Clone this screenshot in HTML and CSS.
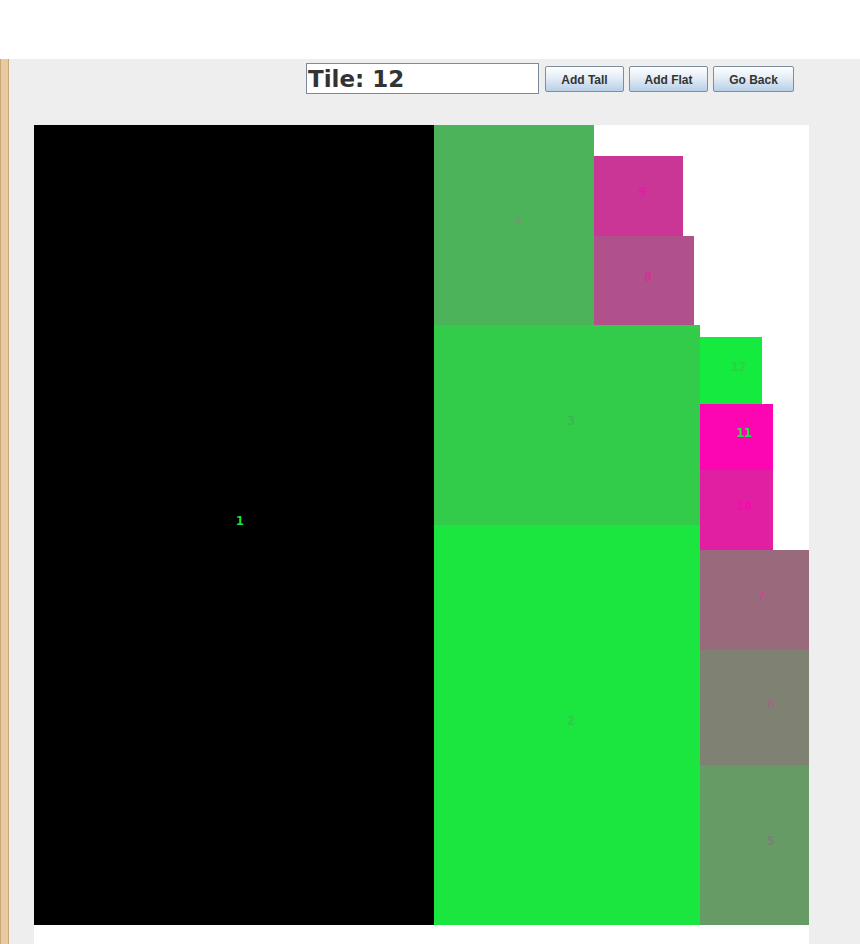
FILE: index.html
```html
<!DOCTYPE html>
<html>
<head>
<meta charset="utf-8">
<title>Tiles</title>
<link rel="stylesheet" href="styles.css">
</head>
<body>
<div class="top-band"></div>
<div class="main">
  <div class="edge"></div>
  <div class="content">
    <div class="toolbar">
      <div class="field">Tile: 12</div>
      <button class="btn btn-a">Add Tall</button>
      <button class="btn btn-a">Add Flat</button>
      <button class="btn btn-b">Go Back</button>
    </div>
    <div class="panel">
      <div class="canvas">
        <div class="tile t1"><span class="lbl l1">1</span></div>
        <div class="col mid">
          <div class="row upper">
            <div class="tile t4"><span class="lbl l4">4</span></div>
            <div class="col sub">
              <div class="sp31"></div>
              <div class="tile t9"><span class="lbl l9">9</span></div>
              <div class="tile t8"><span class="lbl l8">8</span></div>
            </div>
          </div>
          <div class="tile t3"><span class="lbl l3">3</span></div>
          <div class="tile t2"><span class="lbl l2">2</span></div>
        </div>
        <div class="col right">
          <div class="sp212"></div>
          <div class="tile t12"><span class="lbl l12">12</span></div>
          <div class="tile t11"><span class="lbl l11">11</span></div>
          <div class="tile t10"><span class="lbl l10">10</span></div>
          <div class="tile t7"><span class="lbl l7">7</span></div>
          <div class="tile t6"><span class="lbl l6">6</span></div>
          <div class="tile t5"><span class="lbl l5">5</span></div>
        </div>
      </div>
    </div>
  </div>
</div>
</body>
</html>
```
FILE: styles.css
```css
html, body {
  margin: 0;
  padding: 0;
  background: #eeeeee;
  height: 944px;
  overflow: hidden;
}
.top-band {
  height: 59px;
  background: #ffffff;
}
.main {
  display: flex;
  height: 885px;
}
.edge {
  width: 7px;
  flex: none;
  background: #e7caa0;
  border-left: 1px solid #c9a67b;
  border-right: 1px solid #c9a67b;
}
.content {
  flex: 1;
  display: flex;
  flex-direction: column;
}
.toolbar {
  display: flex;
  align-items: center;
  margin-top: 4px;
  margin-left: 297px;
  height: 31px;
}
.field {
  box-sizing: border-box;
  width: 233px;
  height: 31px;
  border: 1px solid #7a8a9b;
  background: #ffffff;
  font-family: "DejaVu Sans", sans-serif;
  font-weight: bold;
  font-size: 23px;
  line-height: 30px;
  color: #333333;
  padding-left: 1px;
}
.btn {
  box-sizing: border-box;
  height: 26px;
  margin-left: 5px;
  border: 1px solid #7d8e9f;
  border-radius: 2px;
  background: linear-gradient(#fdfeff, #e4edf6 45%, #b8cfe7);
  font-family: "Liberation Sans", Arial, sans-serif;
  font-weight: bold;
  font-size: 12px;
  color: #333333;
  padding: 2px 0 0 0;
}
.btn-a { width: 79px; }
.btn-a:first-of-type { margin-left: 6px; }
.btn-b { width: 81px; }
.panel {
  margin-top: 31px;
  margin-left: 25px;
  width: 775px;
  flex: 1;
  background: #ffffff;
}
.canvas {
  display: flex;
  height: 800px;
}
.col {
  display: flex;
  flex-direction: column;
  align-items: flex-start;
}
.row {
  display: flex;
}
.mid { width: 266px; }
.right { width: 109px; }
.sub { width: 106px; }
.sp31 { height: 31px; }
.sp212 { height: 212px; }
.tile {
  position: relative;
  flex: none;
}
.lbl {
  position: absolute;
  left: 50%;
  top: 50%;
  margin-top: -11px;
  font-family: "DejaVu Sans Mono", monospace;
  font-weight: bold;
  font-size: 13px;
  line-height: 13px;
  white-space: nowrap;
}
.t1 { width: 400px; height: 800px; background: #000000; }
.l1 { color: #1ae63f; left: 202px; }
.upper { height: 200px; }
.t4 { width: 160px; height: 200px; background: #4db35b; }
.l4 { color: #6a9d6c; }
.t9 { width: 89px; height: 80px; background: #c93696; }
.l9 { color: #e01fa2; }
.t8 { width: 100px; height: 89px; background: #b0518b; }
.l8 { color: #d52e94; }
.t3 { width: 266px; height: 200px; background: #33cc4a; }
.l3 { color: #3db552; }
.t2 { width: 266px; height: 400px; background: #1ae63f; }
.l2 { color: #33c84d; }
.t12 { width: 62px; height: 67px; background: #15ea3f; }
.l12 { color: #2ed145; }
.t11 { width: 73px; height: 66px; background: #fc05b3; }
.l11 { color: #1ae63f; }
.t10 { width: 73px; height: 80px; background: #e01fa3; }
.l10 { color: #f20cae; }
.t7 { width: 109px; height: 100px; background: #986a7c; }
.l7 { color: #c24d8f; left: 58px; }
.t6 { width: 109px; height: 115px; background: #7f8272; }
.l6 { color: #9a6b7d; left: 67px; }
.t5 { width: 109px; height: 160px; background: #669b65; }
.l5 { color: #7d8072; left: 67px; }
```
